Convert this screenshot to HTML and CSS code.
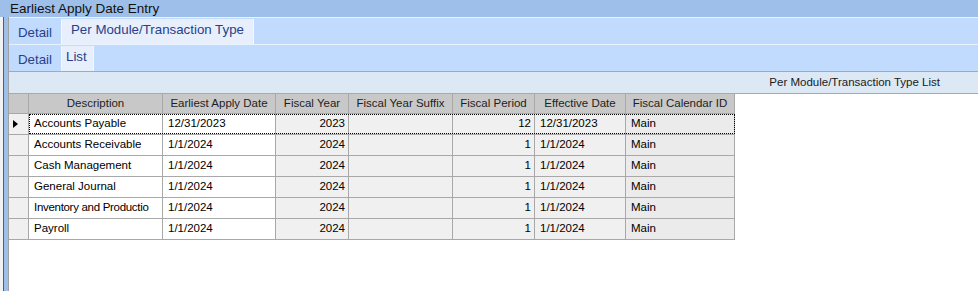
FILE: index.html
```html
<!DOCTYPE html>
<html lang="en">
<head>
    <meta charset="UTF-8">
    <title>Earliest Apply Date Entry</title>
    <link rel="stylesheet" href="styles.css">
</head>
<body>
    <div class="title">Earliest Apply Date Entry</div>
    <div class="frame">
        <div class="edge"></div>
        <div class="main">
            <div class="tabs">
                <div class="tab">Detail</div>
                <div class="tab active">Per Module/Transaction Type</div>
            </div>
            <div class="tabs">
                <div class="tab">Detail</div>
                <div class="tab active small">List</div>
            </div>
            <div class="caption">Per Module/Transaction Type List</div>
            <div class="grid">
                <div class="row head">
                    <div class="rh"></div>
                    <div class="cells">
                        <div class="c w1">Description</div>
                        <div class="c w2">Earliest Apply Date</div>
                        <div class="c w3">Fiscal Year</div>
                        <div class="c w4">Fiscal Year Suffix</div>
                        <div class="c w5">Fiscal Period</div>
                        <div class="c w6">Effective Date</div>
                        <div class="c w7">Fiscal Calendar ID</div>
                    </div>
                </div>
                <div class="row current">
                    <div class="rh"><span class="arrow"></span></div>
                    <div class="cells">
                        <div class="c w1">Accounts Payable</div>
                        <div class="c w2">12/31/2023</div>
                        <div class="c w3 ro num">2023</div>
                        <div class="c w4 ro"></div>
                        <div class="c w5 ro num">12</div>
                        <div class="c w6 ro">12/31/2023</div>
                        <div class="c w7 ro2">Main</div>
                    </div>
                </div>
                <div class="row">
                    <div class="rh"></div>
                    <div class="cells">
                        <div class="c w1">Accounts Receivable</div>
                        <div class="c w2">1/1/2024</div>
                        <div class="c w3 ro num">2024</div>
                        <div class="c w4 ro"></div>
                        <div class="c w5 ro num">1</div>
                        <div class="c w6 ro">1/1/2024</div>
                        <div class="c w7 ro2">Main</div>
                    </div>
                </div>
                <div class="row">
                    <div class="rh"></div>
                    <div class="cells">
                        <div class="c w1">Cash Management</div>
                        <div class="c w2">1/1/2024</div>
                        <div class="c w3 ro num">2024</div>
                        <div class="c w4 ro"></div>
                        <div class="c w5 ro num">1</div>
                        <div class="c w6 ro">1/1/2024</div>
                        <div class="c w7 ro2">Main</div>
                    </div>
                </div>
                <div class="row">
                    <div class="rh"></div>
                    <div class="cells">
                        <div class="c w1">General Journal</div>
                        <div class="c w2">1/1/2024</div>
                        <div class="c w3 ro num">2024</div>
                        <div class="c w4 ro"></div>
                        <div class="c w5 ro num">1</div>
                        <div class="c w6 ro">1/1/2024</div>
                        <div class="c w7 ro2">Main</div>
                    </div>
                </div>
                <div class="row">
                    <div class="rh"></div>
                    <div class="cells">
                        <div class="c w1 tight">Inventory and Productio</div>
                        <div class="c w2">1/1/2024</div>
                        <div class="c w3 ro num">2024</div>
                        <div class="c w4 ro"></div>
                        <div class="c w5 ro num">1</div>
                        <div class="c w6 ro">1/1/2024</div>
                        <div class="c w7 ro2">Main</div>
                    </div>
                </div>
                <div class="row">
                    <div class="rh"></div>
                    <div class="cells">
                        <div class="c w1">Payroll</div>
                        <div class="c w2">1/1/2024</div>
                        <div class="c w3 ro num">2024</div>
                        <div class="c w4 ro"></div>
                        <div class="c w5 ro num">1</div>
                        <div class="c w6 ro">1/1/2024</div>
                        <div class="c w7 ro2">Main</div>
                    </div>
                </div>
            </div>
        </div>
    </div>
</body>
</html>
```

FILE: styles.css
```css
* {
    box-sizing: border-box;
}
html, body {
    height: 100%;
}
body {
    margin: 0;
    font-family: "Liberation Sans", Arial, sans-serif;
    background: #ffffff;
    color: #000;
    display: flex;
    flex-direction: column;
    overflow: hidden;
}
.title {
    height: 17px;
    line-height: 17px;
    padding-left: 10px;
    background: #9dbfe9;
    font-size: 13.5px;
    color: #111;
}
.frame {
    flex: 1;
    display: flex;
}
.edge {
    width: 9px;
    flex: none;
    background: linear-gradient(to right, #f2f2f2 0 3px, #5c5c5c 3px 4px, #9dbfe9 4px 8px, #a0a0a0 8px 9px);
}
.main {
    flex: 1;
    display: flex;
    flex-direction: column;
}
.tabs {
    display: flex;
    height: 27px;
    background: #c0dbfd;
    border-top: 1px solid #eaf2fd;
}
.tab {
    padding: 0 9px;
    font-size: 13.3px;
    color: #28408c;
    line-height: 26px;
    padding-top: 2px;
}
.tab.active {
    background: #e6effb;
    margin-top: 1px;
    height: 25px;
    line-height: 22px;
    padding-top: 0;
    border-left: 1px solid #f4f8fe;
    border-right: 1px solid #f4f8fe;
}
.tab.small {
    padding: 0 6px 0 4px;
}
.caption {
    height: 23px;
    background: #dde8f5;
    border-top: 1px solid #a9a9a9;
    border-bottom: 1px solid #a9a9a9;
    text-align: right;
    padding-right: 38px;
    font-size: 11.5px;
    line-height: 21px;
    color: #1a1a1a;
}
.grid {
    flex: 1;
    font-size: 11.5px;
}
.row {
    display: flex;
    height: 21px;
}
.row.head {
    height: 20px;
}
.rh {
    width: 20px;
    flex: none;
    background: #f0f0f0;
    border-right: 1px solid #a8a8a8;
    border-bottom: 1px solid #a8a8a8;
    display: flex;
    align-items: center;
    padding-left: 4px;
}
.head .rh {
    background: #c8c8c8;
}
.arrow {
    width: 0;
    height: 0;
    border-top: 4px solid transparent;
    border-bottom: 4px solid transparent;
    border-left: 5px solid #000;
}
.cells {
    display: flex;
    position: relative;
}
.c {
    height: 100%;
    border-right: 1px solid #a8a8a8;
    border-bottom: 1px solid #a8a8a8;
    background: #ffffff;
    padding: 0 3px 0 5px;
    line-height: 18px;
    white-space: nowrap;
    overflow: hidden;
}
.head .c {
    background: #c8c8c8;
    text-align: center;
    color: #1e1e1e;
    padding: 0;
    line-height: 19px;
}
.current .cells::after {
    content: "";
    position: absolute;
    left: 0;
    top: 0;
    right: 0;
    bottom: 1px;
    border: 1px dotted #000;
    pointer-events: none;
}
.ro {
    background: #f0f0f0;
}
.ro2 {
    background: #ebebeb;
}
.num {
    text-align: right;
}
.tight {
    letter-spacing: -0.3px;
    padding-left: 5px;
}
.w1 { width: 134px; }
.w2 { width: 113px; }
.w3 { width: 73px; }
.w4 { width: 104px; }
.w5 { width: 82px; }
.w6 { width: 91px; }
.w7 { width: 109px; }
```
